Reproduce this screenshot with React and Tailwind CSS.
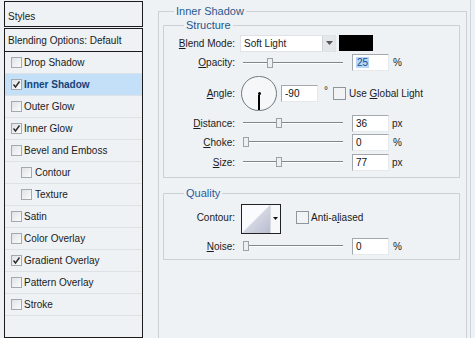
import React from 'react';

const ITEMS = [
  { label: 'Drop Shadow' },
  { label: 'Inner Shadow', checked: true, selected: true },
  { label: 'Outer Glow' },
  { label: 'Inner Glow', checked: true },
  { label: 'Bevel and Emboss' },
  { label: 'Contour', indent: true },
  { label: 'Texture', indent: true },
  { label: 'Satin' },
  { label: 'Color Overlay' },
  { label: 'Gradient Overlay', checked: true },
  { label: 'Pattern Overlay' },
  { label: 'Stroke' },
];

function Check({ checked }) {
  return (
    <div className="w-[11px] h-[11px] shrink-0 border border-[#a3a9ae] bg-gradient-to-br from-[#dfe3e6] to-[#fbfbfb] flex items-center justify-center">
      {checked && (
        <svg width="9" height="9" viewBox="0 0 9 9">
          <path d="M1.5 4.5 L3.5 7 L7.5 1.5" fill="none" stroke="#2b2b2b" strokeWidth="1.4" />
        </svg>
      )}
    </div>
  );
}

function Slider({ pos }) {
  return (
    <div className="relative w-[100px] h-[12px] flex items-center">
      <div className="w-full border-t border-[#80868c] border-b border-b-white" />
      <div className="absolute top-[1px] w-[6px] h-[10px] border border-[#9aa1a7] bg-[#edf0f2]" style={{ left: pos }} />
    </div>
  );
}

function Field({ children, selected }) {
  return (
    <div className="w-[37px] h-[17px] border border-t-[#a2a8ae] border-l-[#a2a8ae] border-r-[#e6e9ec] border-b-[#e6e9ec] bg-white pl-[3px] leading-[15px] text-[#111]">
      {selected ? <span className="bg-[#b7d7f5] text-[#1c4c8f] px-[1px]">{children}</span> : children}
    </div>
  );
}

function Label({ children }) {
  return <div className="w-[71px] text-right shrink-0">{children}</div>;
}

function Acc({ children }) {
  return <span className="underline underline-offset-[1px]">{children}</span>;
}

export default function App() {
  return (
    <div
      className="w-[475px] h-[338px] overflow-hidden bg-[#eef2f5] text-[10px] text-[#1b1b1b] flex"
      style={{ fontFamily: '"Liberation Sans", Arial, sans-serif' }}
    >
      {/* styles list */}
      <div className="ml-[4px] mt-[1px] w-[139px] flex flex-col shrink-0">
        <div className="h-[27px] border border-[#1c1c1c] pl-[3px] pt-[9px] leading-[12px]">Styles</div>
        <div className="mt-[1px] h-[330px] border border-[#1c1c1c] flex flex-col">
          <div className="h-[23px] border-b border-[#1c1c1c] pl-[3px] flex items-center">Blending Options: Default</div>
          {ITEMS.map((it) => (
            <div
              key={it.label}
              className={`h-[22px] shrink-0 border-b border-[#dde2e6] flex items-center ${it.indent ? 'pl-[16px] gap-[3px]' : 'pl-[6px] gap-[2px]'} ${it.selected ? 'bg-[#c3e0f8] font-bold text-[#173f7a]' : ''}`}
            >
              <Check checked={it.checked} />
              <span>{it.label}</span>
            </div>
          ))}
        </div>
      </div>

      {/* settings */}
      <fieldset className="ml-[15px] mt-[5px] w-[309px] h-[350px] shrink-0 border border-[#cbd1d6] pl-[4px] pr-[6px]">
        <legend className="ml-[11px] px-[2px] text-[11px] leading-[13px] text-[#2a5b8e]">Inner Shadow</legend>

        <fieldset className="mt-[1px] border border-[#cbd1d6] pb-[5px]">
          <legend className="ml-[20px] px-[2px] text-[11px] leading-[13px] text-[#1f548f]">Structure</legend>

          <div className="mt-[1px] h-[20px] flex items-center">
            <Label><Acc>B</Acc>lend Mode:</Label>
            <div className="ml-[5px] w-[96px] h-[17px] bg-white border border-[#dfe3e7] flex items-center">
              <span className="pl-[3px] flex-1">Soft Light</span>
              <div className="w-[13px] h-[15px] bg-[#e4e7ea] border-l border-[#d0d5d9] flex items-center justify-center">
                <svg width="7" height="4" viewBox="0 0 7 4"><path d="M0 0 H7 L3.5 4 Z" fill="#555" /></svg>
              </div>
            </div>
            <div className="ml-[3px] w-[34px] h-[16px] bg-black" />
          </div>

          <div className="h-[19px] flex items-center">
            <Label><Acc>O</Acc>pacity:</Label>
            <div className="ml-[8px]"><Slider pos={24} /></div>
            <div className="ml-[9px]"><Field selected>25</Field></div>
            <span className="ml-[4px]">%</span>
          </div>

          <div className="h-[42px] flex items-center">
            <Label><Acc>A</Acc>ngle:</Label>
            <div className="ml-[6px] w-[36px] h-[35px] rounded-full border-[1.5px] border-[#6f777e] bg-[#f5f7f9] flex flex-col items-center">
              <div className="flex-1" />
              <div className="w-[3px] h-[3px] rounded-full bg-black" />
              <div className="w-[1.5px] flex-1 bg-black" />
            </div>
            <div className="ml-[4px]"><Field>-90</Field></div>
            <span className="ml-[6px] w-[8px] -mt-[6px]">°</span>
            <div className="ml-[1px] w-[13px] h-[13px] border border-[#8f969c] bg-[#f1f3f5]" />
            <span className="ml-[3px]">Use <Acc>G</Acc>lobal Light</span>
          </div>

          <div className="h-[18px] flex items-center">
            <Label><Acc>D</Acc>istance:</Label>
            <div className="ml-[8px]"><Slider pos={33} /></div>
            <div className="ml-[9px]"><Field>36</Field></div>
            <span className="ml-[3px]">px</span>
          </div>

          <div className="h-[20px] flex items-center">
            <Label><Acc>C</Acc>hoke:</Label>
            <div className="ml-[8px]"><Slider pos={0} /></div>
            <div className="ml-[9px]"><Field>0</Field></div>
            <span className="ml-[4px]">%</span>
          </div>

          <div className="h-[20px] flex items-center">
            <Label><Acc>S</Acc>ize:</Label>
            <div className="ml-[8px]"><Slider pos={33} /></div>
            <div className="ml-[9px]"><Field>77</Field></div>
            <span className="ml-[3px]">px</span>
          </div>
        </fieldset>

        <fieldset className="mt-[9px] border border-[#cbd1d6] pb-[1px]">
          <legend className="ml-[20px] px-[2px] text-[11px] leading-[13px] text-[#2a5c9a]">Quality</legend>

          <div className="h-[34px] flex items-center">
            <Label>Contour:</Label>
            <div className="ml-[6px] mt-[3px] w-[40px] h-[30px] border border-[#222] flex">
              <svg width="28" height="28" viewBox="0 0 28 28" className="block">
                <defs>
                  <linearGradient id="cg" x1="0" y1="0" x2="1" y2="1">
                    <stop offset="0" stopColor="#eef0f6" />
                    <stop offset="1" stopColor="#b9bccf" />
                  </linearGradient>
                </defs>
                <rect width="28" height="28" fill="#fafbfc" />
                <path d="M0 28 L28 0 L28 28 Z" fill="url(#cg)" />
              </svg>
              <div className="flex-1 bg-[#f7f8f9] border-l border-[#d9dde1] flex items-center justify-center">
                <svg width="5" height="3" viewBox="0 0 5 3"><path d="M0 0 H5 L2.5 3 Z" fill="#111" /></svg>
              </div>
            </div>
            <div className="ml-[15px] w-[13px] h-[13px] border border-[#8f969c] bg-[#f1f3f5]" />
            <span className="ml-[2px]">Anti-a<Acc>l</Acc>iased</span>
          </div>

          <div className="h-[24px] flex items-center">
            <Label><Acc>N</Acc>oise:</Label>
            <div className="ml-[8px]"><Slider pos={0} /></div>
            <div className="ml-[9px]"><Field>0</Field></div>
            <span className="ml-[4px]">%</span>
          </div>
        </fieldset>
      </fieldset>

      <div className="ml-[3px] w-[1px] h-full bg-[#cfd5da]" />
    </div>
  );
}
